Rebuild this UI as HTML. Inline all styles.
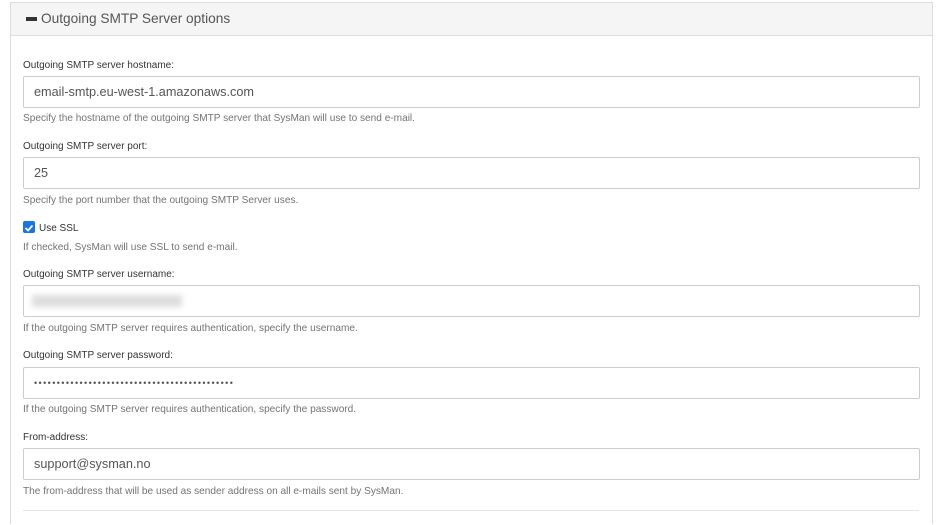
<!DOCTYPE html>
<html><head><style>
body{margin:0;background:#fff;font-family:"Liberation Sans",sans-serif;width:945px;height:525px;overflow:hidden;position:relative}
.panel{position:absolute;left:10px;top:2px;width:921px;height:521px;border:1px solid #ddd;border-bottom:none}
.hd{position:absolute;left:0;top:0;right:0;height:32px;background:#f5f5f5;border-bottom:1px solid #ddd}
.hd span{position:absolute;left:30px;top:8px;font-size:13.7px;color:#555}
.hd i{position:absolute;left:15px;top:14px;width:11px;height:4px;background:#333}
.a{position:absolute;left:23px;font-size:10px;color:#333}
.h{position:absolute;left:23px;font-size:10.1px;color:#737373}
.in{position:absolute;left:23px;width:895px;height:30px;border:1px solid #ccc;border-radius:2px;box-sizing:content-box;font-size:12.7px;color:#555;line-height:31px;text-indent:10px}
.hr{position:absolute;left:23px;width:896px;top:510px;border-top:1px solid #e5e5e5}
.cb{position:absolute;left:23px;top:221px;width:12px;height:12px;background:#1a73e8;border-radius:2px}
</style></head><body>
<div class="panel"><div class="hd"><i></i><span>Outgoing SMTP Server options</span></div></div>
<div class="a" style="top:60px">Outgoing SMTP server hostname:</div>
<div class="in" style="top:76px">email-smtp.eu-west-1.amazonaws.com</div>
<div class="h" style="top:113px">Specify the hostname of the outgoing SMTP server that SysMan will use to send e-mail.</div>
<div class="a" style="top:141px">Outgoing SMTP server port:</div>
<div class="in" style="top:157px">25</div>
<div class="h" style="top:195px">Specify the port number that the outgoing SMTP Server uses.</div>
<div class="cb"><svg width="12" height="12" viewBox="0 0 12 12"><path d="M2.5 6 L5 8.5 L9.5 3.5" stroke="#fff" stroke-width="1.8" fill="none"/></svg></div>
<div class="a" style="top:223px;left:39px">Use SSL</div>
<div class="h" style="top:242px">If checked, SysMan will use SSL to send e-mail.</div>
<div class="a" style="top:269px">Outgoing SMTP server username:</div>
<div class="in" style="top:285px"><div style="position:absolute;left:8px;top:9px;width:150px;height:12px;background:#ddd;filter:blur(3px)"></div></div>
<div class="h" style="top:323px">If the outgoing SMTP server requires authentication, specify the username.</div>
<div class="a" style="top:350px">Outgoing SMTP server password:</div>
<div class="in" style="top:367px;font-size:9px;letter-spacing:1.4px">••••••••••••••••••••••••••••••••••••••••••••</div>
<div class="h" style="top:404px">If the outgoing SMTP server requires authentication, specify the password.</div>
<div class="a" style="top:432px">From-address:</div>
<div class="in" style="top:448px">support@sysman.no</div>
<div class="h" style="top:486px">The from-address that will be used as sender address on all e-mails sent by SysMan.</div>
<div class="hr"></div>
</body></html>
